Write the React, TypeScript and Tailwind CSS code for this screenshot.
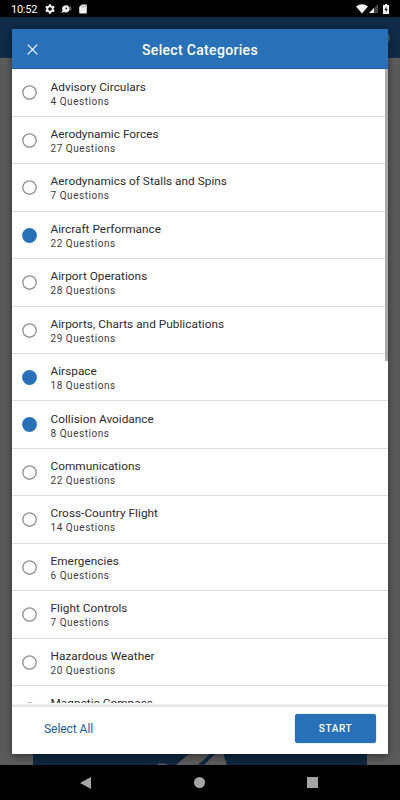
type Category = { name: string; count?: number; selected?: boolean };

const categories: Category[] = [
  { name: "Advisory Circulars", count: 4 },
  { name: "Aerodynamic Forces", count: 27 },
  { name: "Aerodynamics of Stalls and Spins", count: 7 },
  { name: "Aircraft Performance", count: 22, selected: true },
  { name: "Airport Operations", count: 28 },
  { name: "Airports, Charts and Publications", count: 29 },
  { name: "Airspace", count: 18, selected: true },
  { name: "Collision Avoidance", count: 8, selected: true },
  { name: "Communications", count: 22 },
  { name: "Cross-Country Flight", count: 14 },
  { name: "Emergencies", count: 6 },
  { name: "Flight Controls", count: 7 },
  { name: "Hazardous Weather", count: 20 },
  { name: "Magnetic Compass" },
];

function StatusBar() {
  return (
    <div className="flex h-[17px] shrink-0 items-center bg-black pl-[11px] pr-[10px] text-white">
      <span className="w-[26px] whitespace-nowrap pt-px text-[11px] leading-[17px] tracking-[-0.25px]">10:52</span>
      <svg className="ml-[7px] size-3" viewBox="0 0 24 24" fill="#eee">
        <path d="M19.14 12.94c.04-.3.06-.61.06-.94s-.02-.64-.07-.94l2.03-1.58a.49.49 0 0 0 .12-.61l-1.92-3.32a.49.49 0 0 0-.59-.22l-2.39.96a7 7 0 0 0-1.62-.94l-.36-2.54a.48.48 0 0 0-.48-.41h-3.84a.47.47 0 0 0-.47.41l-.36 2.54c-.59.24-1.13.57-1.62.94l-2.39-.96a.48.48 0 0 0-.59.22L2.74 8.87a.47.47 0 0 0 .12.61l2.03 1.58a6 6 0 0 0-.02 1.88l-2.03 1.58a.49.49 0 0 0-.12.61l1.92 3.32c.12.22.37.29.59.22l2.39-.96c.5.38 1.03.7 1.62.94l.36 2.54c.05.24.24.41.48.41h3.84c.24 0 .44-.17.47-.41l.36-2.54c.59-.24 1.13-.56 1.62-.94l2.39.96c.22.08.47 0 .59-.22l1.92-3.32a.47.47 0 0 0-.12-.61zM12 15.6a3.6 3.6 0 1 1 0-7.2 3.6 3.6 0 0 1 0 7.2z" />
      </svg>
      <svg className="ml-[5px] h-[10px] w-[11px]" viewBox="0 0 11 10">
        <path d="M5 1.2a3.6 3.6 0 1 1-1.8 6.7L.2 9l1.4-2.4A3.6 3.6 0 0 1 5 1.2z" fill="#eee" />
        <circle cx="5.3" cy="4.4" r=".8" fill="#111" />
        <path d="M9 3.2h1M9.2 5h1.2M8.8 6.8h.8" stroke="#ccc" strokeWidth="1" />
      </svg>
      <svg className="ml-[7px] h-[10px] w-[8px]" viewBox="0 0 8 10">
        <path d="M2.7.5H7q.8 0 .8.8v7.4q0 .8-.8.8H1q-.8 0-.8-.8V3z" fill="#eee" />
        <path d="M3 1.7v1.6M4.6 1.7v1.6M6.2 1.7v1.6" stroke="#777" strokeWidth=".7" />
      </svg>
      <svg className="ml-auto h-[10px] w-[12px]" viewBox="0 0 12 10">
        <path d="M0 2.4Q6-2 12 2.4L6 9.6z" fill="#f2f2f2" />
      </svg>
      <svg className="ml-[1px] size-[9px]" viewBox="0 0 9 9">
        <path d="M9 0v9H0z" fill="#444" />
        <path d="M5 4v5H0z" fill="#f2f2f2" />
      </svg>
      <svg className="ml-[5px] mr-px h-[10px] w-[6px]" viewBox="0 0 6 10">
        <path d="M2 0h2v1h2v9H0V1h2z" fill="#f2f2f2" />
        <path d="M3.5 2.3 1.5 6h1.3v2.5L4.6 5H3.3z" fill="#111" />
      </svg>
    </div>
  );
}

function CategoryRow({ name, count, selected }: Category) {
  return (
    <li className="flex h-[47.45px] items-center border-b border-[#dedede] pl-[10px]">
      <svg className="mt-[0.5px] size-[15px] shrink-0" viewBox="0 0 15 15">
        {selected ? (
          <circle cx="7.5" cy="7.5" r="7.4" fill="#2871b9" />
        ) : (
          <circle cx="7.5" cy="7.5" r="6.7" fill="none" stroke="#929292" strokeWidth="1.35" />
        )}
      </svg>
      <span className="ml-[13.5px] flex flex-col whitespace-nowrap pt-[2.8px]">
        <span className="text-[11.8px] leading-[15px] tracking-[0.03px] text-[#2b2b2b]">{name}</span>
        <span className="h-[14px] text-[10px] leading-[14px] tracking-[0.54px] text-[#3c3c3c]">
          {count !== undefined && `${count} Questions`}
        </span>
      </span>
    </li>
  );
}

function CategoryDialog() {
  return (
    <section className="absolute left-3 top-[29px] flex h-[725px] w-[376px] flex-col bg-white shadow-[0_2px_8px_rgba(0,0,0,0.5)]">
      <header className="grid h-[40.4px] shrink-0 grid-cols-[41px_1fr_41px] items-center border-b border-[#2163a5] bg-[#2871b9] text-white">
        <svg className="ml-[15px] mt-px size-[11px]" viewBox="0 0 11 11" stroke="white" strokeWidth="1.15">
          <path d="M.7.7l9.6 9.6M10.3.7.7 10.3" />
        </svg>
        <h1 className="pt-[2px] text-center text-[14px] font-medium leading-5 tracking-[0.32px]">Select Categories</h1>
      </header>
      <div className="relative h-[633.6px] shrink-0 overflow-hidden">
        <ul>
          {categories.map((category) => (
            <CategoryRow key={category.name} {...category} />
          ))}
        </ul>
        <div className="absolute right-0 top-0 h-[292px] w-[3.5px] bg-[#a9a9a9]" />
      </div>
      <div className="mt-px h-[3px] shrink-0 bg-gradient-to-b from-[#f3f3f3] to-[#dedede]" />
      <footer className="flex flex-1 items-center justify-between pb-1 pl-8 pr-3">
        <button className="pt-px text-[12px] leading-4 tracking-[-0.05px] text-[#17609f]">Select All</button>
        <button className="h-[29px] w-[81px] rounded-[3px] bg-[#2871b9] pt-px text-[10px] font-medium tracking-[0.6px] text-white shadow-[0_0_1px_#17558f]">
          START
        </button>
      </footer>
    </section>
  );
}

function NavigationBar() {
  return (
    <nav className="flex h-[35px] shrink-0 items-center justify-between bg-black pl-[80px] pr-[82px]">
      <svg className="h-3 w-[11px]" viewBox="0 0 11 12" fill="#a5a5a5">
        <path d="M11 0v12L0 6z" />
      </svg>
      <span className="size-[11px] rounded-full bg-[#a5a5a5]" />
      <span className="size-[11px] bg-[#a5a5a5]" />
    </nav>
  );
}

export default function App() {
  return (
    <main className="relative flex h-[800px] w-[400px] flex-col overflow-hidden bg-[#5c5c5c] font-['Roboto',sans-serif]">
      <StatusBar />
      <div className="flex h-[41px] shrink-0 items-center justify-end bg-[#102c48] pr-[10px]">
        <span className="size-3 rounded-full bg-[#515e6b]" />
      </div>
      <div className="flex flex-1 items-end pl-[33px]">
        <svg className="h-[30px] w-[334px] bg-[#10273f]" viewBox="0 0 334 30" fill="#5c5c5c">
          <path d="M143 30l14-12h21L165 30z" />
          <path d="M171 30l12-12h7l4 12z" />
          <path d="M124 30l2-1.5 6 .3 3 1.2z" />
        </svg>
      </div>
      <NavigationBar />
      <CategoryDialog />
    </main>
  );
}
